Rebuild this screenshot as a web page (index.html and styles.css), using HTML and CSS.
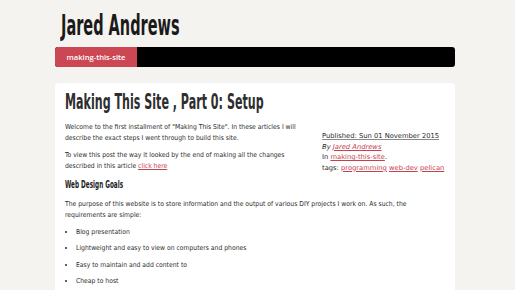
FILE: index.html
```html
<!DOCTYPE html>
<html lang="en">
<head>
    <meta charset="UTF-8">
    <title>Making This Site , Part 0: Setup</title>
    <link rel="stylesheet" href="styles.css">
</head>
<body>
    <div class="page">
        <header class="site-header">
            <h1><a href="#">Jared Andrews</a></h1>
        </header>
        <nav class="menu">
            <a class="active" href="#">making-this-site</a>
        </nav>

        <article class="post">
            <h2 class="post-title"><span>Making This Site , Part 0: Setup</span></h2>
            <aside class="post-info">
                <span class="published">Published: Sun 01 November 2015</span><br>
                <em>By <a href="#">Jared Andrews</a></em><br>
                In <a href="#">making-this-site</a>.<br>
                tags: <a href="#">programming</a> <a href="#">web-dev</a> <a href="#">pelican</a>
            </aside>
            <p>Welcome to the first installment of "Making This Site". In these articles I will describe the exact steps I went through to build this site.</p>
            <p>To view this post the way it looked by the end of making all the changes described in this article <a href="#">click here</a></p>

            <h3><span>Web Design Goals</span></h3>
            <p>The purpose of this website is to store information and the output of various DIY projects I work on. As such, the requirements are simple:</p>
            <ul>
                <li>Blog presentation</li>
                <li>Lightweight and easy to view on computers and phones</li>
                <li>Easy to maintain and add content to</li>
                <li>Cheap to host</li>
            </ul>
        </article>
    </div>
</body>
</html>
```

FILE: styles.css
```css
body {
    margin: 0;
    background-color: #f4f3ef;
    font-family: "DejaVu Sans", Verdana, sans-serif;
    color: #2b2b2b;
}
.page {
    width: 400px;
    margin-left: 55px;
}
a {
    color: #c7404e;
}
.site-header h1 {
    margin: 0;
    padding: 10px 0 0 6px;
    height: 37px;
    font-size: 29px;
    font-weight: bold;
    line-height: 30px;
    white-space: nowrap;
}
.site-header h1 a {
    display: inline-block;
    color: #1a1a1a;
    text-decoration: none;
    transform: scaleX(0.5);
    transform-origin: left center;
}
.menu {
    display: flex;
    height: 20px;
    background-color: #000;
    border-radius: 3px;
    overflow: hidden;
}
.menu a {
    display: block;
    width: 82px;
    line-height: 20px;
    text-align: center;
    background-color: #cc4754;
    color: #fff;
    font-family: "Open Sans", sans-serif;
    font-size: 7.6px;
    font-weight: 600;
    text-decoration: none;
}
.post {
    margin-top: 16px;
    padding: 6px 10px 10px 10px;
    background-color: #fff;
    border-radius: 4px;
    font-size: 6.75px;
    font-stretch: condensed;
    line-height: 10.6px;
}
.post-title {
    margin: 0 0 7px 0;
    font-size: 22px;
    font-weight: bold;
    font-stretch: normal;
    line-height: 26px;
    color: #2e2e2e;
    white-space: nowrap;
}
.post-title span,
.post h3 span {
    display: inline-block;
    transform-origin: left center;
}
.post-title span {
    transform: scaleX(0.505);
}
.post p {
    margin: 0 0 7px 0;
}
.post-info {
    float: right;
    width: 123px;
    margin-top: 9px;
    margin-left: 6px;
    font-stretch: normal;
}
.published {
    text-decoration: underline;
    text-decoration-color: #888;
}
.post h3 {
    margin: 6px 0 7px 0;
    font-size: 11px;
    font-stretch: normal;
    line-height: 14px;
    color: #222;
    white-space: nowrap;
}
.post h3 span {
    transform: scaleX(0.52);
}
.post ul {
    margin: -1px 0 0 0;
    padding-left: 11px;
}
.post li {
    margin: 6px 0 0 0;
}
```
